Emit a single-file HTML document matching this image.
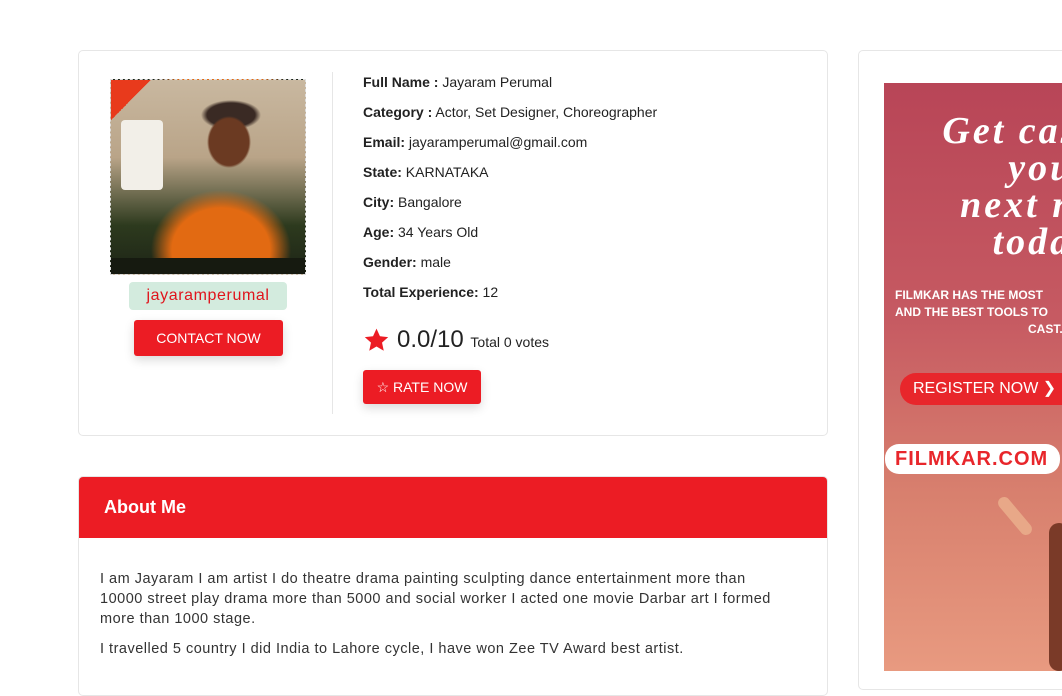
<!DOCTYPE html>
<html><head><meta charset="utf-8"><style>
*{box-sizing:border-box;margin:0;padding:0}
body{width:1062px;height:671px;overflow:hidden;background:#fff;font-family:"Liberation Sans",Arial,sans-serif;color:#222;position:relative}
.card{position:absolute;left:78px;top:50px;width:750px;height:386px;border:1px solid #e6e6e6;border-radius:5px;background:#fff}
.photo{position:absolute;left:110px;top:79px;width:196px;height:196px;border:1px dashed #ddd;overflow:hidden;
background:
radial-gradient(ellipse 22px 26px at 118px 62px,#6b3a22 90%,transparent 100%),
radial-gradient(ellipse 70px 60px at 110px 170px,#e26a12 70%,transparent 100%),
radial-gradient(ellipse 30px 15px at 120px 35px,#3a2a24 80%,transparent 100%),
linear-gradient(180deg,#c9b8a0 0%,#b9a488 40%,#2d3a1e 75%,#1d2416 100%);}
.photo .a{position:absolute;left:0;top:0;width:40px;height:40px;background:linear-gradient(135deg,#e83a1c 50%,transparent 50%)}
.photo .b{position:absolute;left:10px;top:40px;width:42px;height:70px;background:#f2efe8;border-radius:4px}
.photo .c{position:absolute;left:0;top:178px;width:196px;height:18px;background:#161a10}
.tag{position:absolute;left:129px;top:282px;width:158px;height:28px;background:#d3ebde;border-radius:4px;color:#e0141c;font-size:16px;text-align:center;line-height:28px;letter-spacing:.6px}
.btn{position:absolute;background:#ec1c24;color:#fff;border-radius:3px;text-align:center;font-size:14px;box-shadow:0 4px 10px rgba(0,0,0,.15)}
.vline{position:absolute;left:332px;top:72px;width:1px;height:342px;background:#e6e6e6}
.info{position:absolute;left:363px;font-size:14px;color:#222}
.info b{font-weight:bold}
.about{position:absolute;left:78px;top:476px;width:750px;height:220px;border:1px solid #e6e6e6;border-radius:5px;overflow:hidden}
.about .h{height:61px;background:#ec1c24;color:#fff;font-size:18px;font-weight:bold;padding-left:25px;line-height:61px}
.about p{font-size:14.5px;color:#333;line-height:20px;padding:0 0 0 21px;letter-spacing:.5px;white-space:nowrap}
.side{position:absolute;left:858px;top:50px;width:220px;height:640px;border:1px solid #e6e6e6;border-radius:5px}
.ad{position:absolute;left:884px;top:83px;width:178px;height:588px;overflow:hidden;background:linear-gradient(180deg,#b84557 0%,#c65a62 40%,#d8806e 70%,#e89a80 100%)}
.ad .t{position:absolute;left:0;top:30px;color:#fff;font-family:"Liberation Serif",serif;font-style:italic;font-weight:bold;font-size:38px;line-height:37px;text-align:right;width:208px;letter-spacing:3px;white-space:nowrap}
.ad .s{position:absolute;left:11px;top:204px;color:#fff;font-weight:bold;font-size:12px;line-height:17px;white-space:nowrap;width:200px}
.ad .r{position:absolute;left:16px;top:290px;width:180px;height:32px;background:#e8262b;border-radius:16px;color:#fff;font-size:16px;line-height:32px;padding-left:13px}
.ad .f{position:absolute;left:1px;top:361px;width:175px;height:30px;background:#fff;border-radius:14px;color:#e8262b;font-weight:bold;font-size:20px;line-height:30px;padding-left:10px;letter-spacing:1px}
</style></head><body>
<div class="card"></div>
<div class="photo"><div class="a"></div><div class="b"></div><div class="c"></div></div>
<div class="tag">jayaramperumal</div>
<div class="btn" style="left:134px;top:320px;width:149px;height:36px;line-height:36px">CONTACT NOW</div>
<div class="vline"></div>
<div class="info" style="top:74px"><b>Full Name :</b> Jayaram Perumal</div>
<div class="info" style="top:104px"><b>Category :</b> Actor, Set Designer, Choreographer</div>
<div class="info" style="top:134px"><b>Email:</b> jayaramperumal@gmail.com</div>
<div class="info" style="top:164px"><b>State:</b> KARNATAKA</div>
<div class="info" style="top:194px"><b>City:</b> Bangalore</div>
<div class="info" style="top:224px"><b>Age:</b> 34 Years Old</div>
<div class="info" style="top:254px"><b>Gender:</b> male</div>
<div class="info" style="top:284px"><b>Total Experience:</b> 12</div>
<svg style="position:absolute;left:363px;top:327px" width="27" height="26" viewBox="0 0 24 24"><path d="M12 1.5l3.2 7 7.6.8-5.7 5.1 1.6 7.5L12 18l-6.7 3.9 1.6-7.5L1.2 9.3l7.6-.8z" fill="#ec1c24"/></svg>
<div class="info" style="top:326px;font-size:24px;left:397px">0.0/10 <span style="font-size:14px">Total 0 votes</span></div>
<div class="btn" style="left:363px;top:370px;width:118px;height:34px;line-height:34px;font-size:14px">☆ RATE NOW</div>
<div class="about"><div class="h">About Me</div>
<p style="margin-top:31px">I am Jayaram I am artist I do theatre drama painting sculpting dance entertainment more than<br>10000 street play drama more than 5000 and social worker I acted one movie Darbar art I formed<br>more than 1000 stage.</p>
<p style="margin-top:10px">I travelled 5 country I did India to Lahore cycle, I have won Zee TV Award best artist.</p></div>
<div class="side"></div>
<div class="ad">
<div class="t">Get cast<br>your<br>next ro<br>today</div>
<div class="s">FILMKAR HAS THE MOST<br>AND THE BEST TOOLS TO<br><span style="padding-left:133px">CAST.</span></div>
<div class="r">REGISTER NOW ❯</div>
<div class="f">FILMKAR.COM</div>
<div style="position:absolute;left:125px;top:410px;width:12px;height:46px;background:#e8a888;border-radius:6px;transform:rotate(-40deg)"></div>
<div style="position:absolute;left:165px;top:440px;width:20px;height:148px;background:#7a3a28;border-radius:10px"></div>
</div>
</body></html>
